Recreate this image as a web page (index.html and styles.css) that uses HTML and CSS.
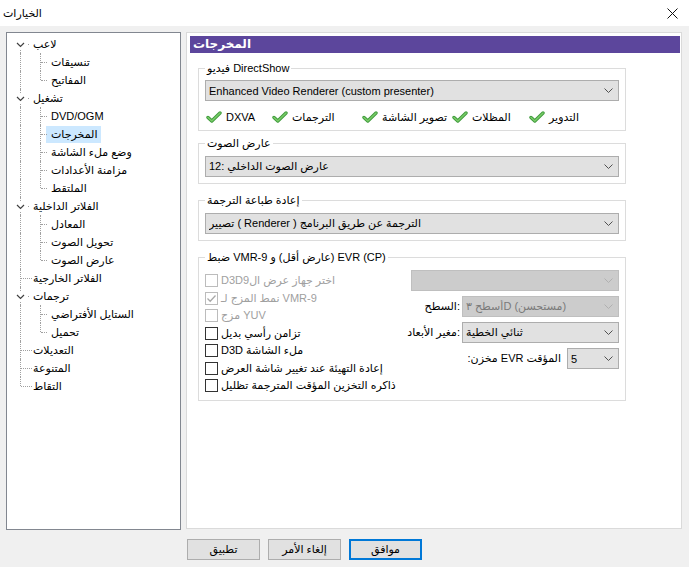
FILE: index.html
```html
<!DOCTYPE html>
<html lang="ar">
<head>
<meta charset="utf-8">
<title>الخيارات</title>
<link rel="stylesheet" href="styles.css">
</head>
<body>
<div class="titlebar">
  <span class="title">الخيارات</span>
  <svg class="close" width="11" height="11" viewBox="0 0 11 11"><path d="M0.5 0.5 L10.5 10.5 M10.5 0.5 L0.5 10.5" stroke="#111" stroke-width="1" fill="none"/></svg>
</div>
<div class="content">
  <div class="tree">
    <div class="row"><span class="cell c0 vb"><svg class="exp" width="9" height="9" viewBox="0 0 9 9"><rect width="9" height="9" fill="#fff"/><path d="M1 3 L4.5 6.5 L8 3" stroke="#404040" stroke-width="1.2" fill="none"/></svg><i class="dot"></i></span><span class="t">لاعب</span></div>
    <div class="row"><span class="cell c0 v"></span><span class="cell c1 v h"></span><span class="t">تنسيقات</span></div>
    <div class="row"><span class="cell c0 v"></span><span class="cell c1 vt h"></span><span class="t">المفاتيح</span></div>
    <div class="row"><span class="cell c0 v"><svg class="exp" width="9" height="9" viewBox="0 0 9 9"><rect width="9" height="9" fill="#fff"/><path d="M1 3 L4.5 6.5 L8 3" stroke="#404040" stroke-width="1.2" fill="none"/></svg><i class="dot"></i></span><span class="t">تشغيل</span></div>
    <div class="row"><span class="cell c0 v"></span><span class="cell c1 v h"></span><span class="t">DVD/OGM</span></div>
    <div class="row"><span class="cell c0 v"></span><span class="cell c1 v h"></span><span class="t sel">المخرجات</span></div>
    <div class="row"><span class="cell c0 v"></span><span class="cell c1 v h"></span><span class="t">وضع ملء الشاشة</span></div>
    <div class="row"><span class="cell c0 v"></span><span class="cell c1 v h"></span><span class="t">مزامنة الأعدادات</span></div>
    <div class="row"><span class="cell c0 v"></span><span class="cell c1 vt h"></span><span class="t">الملتقط</span></div>
    <div class="row"><span class="cell c0 v"><svg class="exp" width="9" height="9" viewBox="0 0 9 9"><rect width="9" height="9" fill="#fff"/><path d="M1 3 L4.5 6.5 L8 3" stroke="#404040" stroke-width="1.2" fill="none"/></svg><i class="dot"></i></span><span class="t">الفلاتر الداخلية</span></div>
    <div class="row"><span class="cell c0 v"></span><span class="cell c1 v h"></span><span class="t">المعادل</span></div>
    <div class="row"><span class="cell c0 v"></span><span class="cell c1 v h"></span><span class="t">تحويل الصوت</span></div>
    <div class="row"><span class="cell c0 v"></span><span class="cell c1 vt h"></span><span class="t">عارض الصوت</span></div>
    <div class="row"><span class="cell c0 v h"></span><span class="t">الفلاتر الخارجية</span></div>
    <div class="row"><span class="cell c0 v"><svg class="exp" width="9" height="9" viewBox="0 0 9 9"><rect width="9" height="9" fill="#fff"/><path d="M1 3 L4.5 6.5 L8 3" stroke="#404040" stroke-width="1.2" fill="none"/></svg><i class="dot"></i></span><span class="t">ترجمات</span></div>
    <div class="row"><span class="cell c0 v"></span><span class="cell c1 v h"></span><span class="t">الستايل الأفتراضي</span></div>
    <div class="row"><span class="cell c0 v"></span><span class="cell c1 vt h"></span><span class="t">تحميل</span></div>
    <div class="row"><span class="cell c0 v h"></span><span class="t">التعديلات</span></div>
    <div class="row"><span class="cell c0 v h"></span><span class="t">المتنوعة</span></div>
    <div class="row"><span class="cell c0 vt h"></span><span class="t">التقاط</span></div>
  </div>

  <div class="panel">
    <div class="header">المخرجات</div>

    <div class="group g1">
      <div class="legend"><span class="i">فيديو</span> <span class="i">DirectShow</span></div>
      <div class="combo"><span class="val">Enhanced Video Renderer (custom presenter)</span><svg class="chev" width="9" height="5" viewBox="0 0 9 5"><path d="M0.5 0.5 L4.5 4.5 L8.5 0.5" stroke="#505050" fill="none"/></svg></div>
      <div class="caps">
        <span class="cap"><svg class="ok" width="16" height="12" viewBox="0 0 16 12"><path d="M2 6.5 L5.8 10 L14 2" stroke="#3f9a3c" stroke-width="3.4" stroke-linecap="round" stroke-linejoin="round" fill="none"/><path d="M2 6.5 L5.8 10 L14 2" stroke="#79cc68" stroke-width="1.6" stroke-linecap="round" stroke-linejoin="round" fill="none"/></svg>DXVA</span>
        <span class="cap"><svg class="ok" width="16" height="12" viewBox="0 0 16 12"><path d="M2 6.5 L5.8 10 L14 2" stroke="#3f9a3c" stroke-width="3.4" stroke-linecap="round" stroke-linejoin="round" fill="none"/><path d="M2 6.5 L5.8 10 L14 2" stroke="#79cc68" stroke-width="1.6" stroke-linecap="round" stroke-linejoin="round" fill="none"/></svg>الترجمات</span>
        <span class="cap"><svg class="ok" width="16" height="12" viewBox="0 0 16 12"><path d="M2 6.5 L5.8 10 L14 2" stroke="#3f9a3c" stroke-width="3.4" stroke-linecap="round" stroke-linejoin="round" fill="none"/><path d="M2 6.5 L5.8 10 L14 2" stroke="#79cc68" stroke-width="1.6" stroke-linecap="round" stroke-linejoin="round" fill="none"/></svg>تصوير الشاشة</span>
        <span class="cap"><svg class="ok" width="16" height="12" viewBox="0 0 16 12"><path d="M2 6.5 L5.8 10 L14 2" stroke="#3f9a3c" stroke-width="3.4" stroke-linecap="round" stroke-linejoin="round" fill="none"/><path d="M2 6.5 L5.8 10 L14 2" stroke="#79cc68" stroke-width="1.6" stroke-linecap="round" stroke-linejoin="round" fill="none"/></svg>المظلات</span>
        <span class="cap"><svg class="ok" width="16" height="12" viewBox="0 0 16 12"><path d="M2 6.5 L5.8 10 L14 2" stroke="#3f9a3c" stroke-width="3.4" stroke-linecap="round" stroke-linejoin="round" fill="none"/><path d="M2 6.5 L5.8 10 L14 2" stroke="#79cc68" stroke-width="1.6" stroke-linecap="round" stroke-linejoin="round" fill="none"/></svg>التدوير</span>
      </div>
    </div>

    <div class="group g2">
      <div class="legend">عارض الصوت</div>
      <div class="combo"><span class="val"><span class="i">12:</span> <span class="i">عارض الصوت الداخلي</span></span><svg class="chev" width="9" height="5" viewBox="0 0 9 5"><path d="M0.5 0.5 L4.5 4.5 L8.5 0.5" stroke="#505050" fill="none"/></svg></div>
    </div>

    <div class="group g3">
      <div class="legend">إعادة طباعة الترجمة</div>
      <div class="combo"><span class="val"><span class="i">تصيير</span> <span class="i">( Renderer )</span> <span class="i">الترجمة عن طريق البرنامج</span></span><svg class="chev" width="9" height="5" viewBox="0 0 9 5"><path d="M0.5 0.5 L4.5 4.5 L8.5 0.5" stroke="#505050" fill="none"/></svg></div>
    </div>

    <div class="group g4">
      <div class="legend"><span class="i">ضبط</span> <span class="i">VMR-9</span> <span class="i">و</span> <span class="i">(عارض أقل)</span> <span class="i">EVR (CP)</span></div>
      <div class="checks">
        <div class="cb dis"><span class="box"></span><span class="lbl"><span class="i">D3D9</span><span class="i">اختر جهاز عرض ال</span></span></div>
        <div class="cb dis"><span class="box"><svg width="11" height="11" viewBox="0 0 11 11"><path d="M1.5 5.5 L4.2 8.2 L9.5 2.5" stroke="#a8a8a8" stroke-width="1.3" fill="none"/></svg></span><span class="lbl"><span class="i">نمط المزج لـ</span> <span class="i">VMR-9</span></span></div>
        <div class="cb dis"><span class="box"></span><span class="lbl"><span class="i">مزج</span> <span class="i">YUV</span></span></div>
        <div class="cb"><span class="box"></span><span class="lbl">تزامن رأسي بديل</span></div>
        <div class="cb"><span class="box"></span><span class="lbl"><span class="i">D3D</span> <span class="i">ملء الشاشة</span></span></div>
        <div class="cb"><span class="box"></span><span class="lbl">إعادة التهيئة عند تغيير شاشة العرض</span></div>
        <div class="cb"><span class="box"></span><span class="lbl">ذاكره التخزين المؤقت المترجمة تظليل</span></div>
      </div>
      <div class="opts">
        <div class="combo dcombo wide"><span class="val"></span><svg class="chev" width="9" height="5" viewBox="0 0 9 5"><path d="M0.5 0.5 L4.5 4.5 L8.5 0.5" stroke="#b0b0b0" fill="none"/></svg></div>
        <div class="orow"><span class="lab">السطح:</span><div class="combo dcombo mid"><span class="val"><span class="i">أسطح ٣</span><span class="i">D</span> <span class="i">(مستحسن)</span></span><svg class="chev" width="9" height="5" viewBox="0 0 9 5"><path d="M0.5 0.5 L4.5 4.5 L8.5 0.5" stroke="#b0b0b0" fill="none"/></svg></div></div>
        <div class="orow"><span class="lab">مغير الأبعاد:</span><div class="combo mid"><span class="val">ثنائي الخطية</span><svg class="chev" width="9" height="5" viewBox="0 0 9 5"><path d="M0.5 0.5 L4.5 4.5 L8.5 0.5" stroke="#505050" fill="none"/></svg></div></div>
        <div class="orow"><span class="lab" dir="rtl">المؤقت EVR مخزن:</span><div class="combo small"><span class="val">5</span><svg class="chev" width="9" height="5" viewBox="0 0 9 5"><path d="M0.5 0.5 L4.5 4.5 L8.5 0.5" stroke="#505050" fill="none"/></svg></div></div>
      </div>
    </div>
  </div>
</div>
<div class="footer">
  <button class="btn">تطبيق</button>
  <button class="btn">إلغاء الأمر</button>
  <button class="btn def">موافق</button>
</div>
</body>
</html>
```

FILE: styles.css
```css
* { box-sizing: border-box; }
html, body { margin: 0; padding: 0; }
body {
  width: 689px;
  height: 567px;
  overflow: hidden;
  background: #f0f0f0;
  font-family: "Liberation Sans", "DejaVu Sans", sans-serif;
  font-size: 11px;
  color: #000;
}
.i { unicode-bidi: isolate; }

.titlebar {
  height: 26px;
  background: #fff;
  display: flex;
  align-items: center;
  justify-content: space-between;
  padding: 0 11px 0 3px;
}
.title { font-size: 11px; }

.content {
  display: flex;
  gap: 5px;
  padding: 6px 6px 0 6px;
}

/* tree */
.tree {
  width: 175px;
  height: 498px;
  border: 1px solid #828790;
  background: #fff;
  padding-top: 2px;
  flex: none;
}
.row { display: flex; height: 18px; align-items: center; }
.cell { position: relative; height: 18px; flex: none; }
.c0 { width: 21px; }
.c1 { width: 18px; }
.v::before, .vt::before, .vb::before {
  content: "";
  position: absolute;
  top: 0; bottom: 0;
  border-left: 1px dotted #a0a0a0;
}
.c0::before { left: 13px; }
.c1::before { left: 12px; }
.vt::before { bottom: 9px; }
.vb::before { top: 9px; }
.h::after {
  content: "";
  position: absolute;
  top: 9px;
  height: 0;
  border-top: 1px dotted #a0a0a0;
}
.c0.h::after { left: 14px; width: 11px; }
.c1.h::after { left: 13px; width: 6px; }
.exp { position: absolute; left: 9px; top: 5px; }
.dot { position: absolute; left: 21px; top: 9px; width: 1px; height: 1px; background: #a0a0a0; }
.t {
  white-space: nowrap;
  padding: 0 4px 0 5px;
  height: 17px;
  line-height: 17px;
}
.t.sel { background: #cce8ff; }

/* panel */
.panel {
  width: 496px;
  height: 497px;
  border: 1px solid #dadada;
  background: #fff;
  padding: 3px 1px 0 3px;
  flex: none;
}
.header {
  height: 17px;
  line-height: 17px;
  background: #5c469c;
  color: #fff;
  font-weight: bold;
  font-size: 12px;
  padding-left: 3px;
}
.group {
  position: relative;
  width: 428px;
  margin-left: 8px;
  border: 1px solid #dcdcdc;
  padding: 0 6px;
}
.legend {
  position: absolute;
  top: -8px;
  left: 6px;
  padding: 0 2px;
  background: #fff;
  line-height: 15px;
  white-space: nowrap;
}
.g1 { margin-top: 15px; height: 63px; padding-top: 11px; }
.g2 { margin-top: 12px; height: 41px; padding-top: 12px; }
.g3 { margin-top: 16px; height: 41px; padding-top: 12px; }
.g4 {
  margin-top: 16px;
  height: 144px;
  padding-top: 12px;
  display: flex;
  align-items: flex-start;
}

.combo {
  height: 21px;
  background: #e1e1e1;
  border: 1px solid #adadad;
  display: flex;
  align-items: center;
  padding-left: 3px;
  white-space: nowrap;
}
.combo .val { flex: 1; overflow: hidden; }
.chev { flex: none; margin-right: 5px; }
.dcombo { background: #cccccc; border-color: #bfbfbf; color: #7a7a7a; }

.caps {
  display: grid;
  grid-template-columns: 66px 90px 90px 77px 1fr;
  margin-top: 8px;
  padding-left: 1px;
  height: 16px;
}
.cap { display: flex; align-items: center; gap: 4px; white-space: nowrap; }
.ok { flex: none; }

.checks { display: flex; flex-direction: column; padding-top: 2px; }
.cb { display: flex; align-items: center; height: 17.5px; gap: 3px; white-space: nowrap; }
.box {
  width: 13px; height: 13px;
  border: 1px solid #333;
  background: #fff;
  flex: none;
  display: flex; align-items: center; justify-content: center;
}
.cb.dis { color: #a0a0a0; }
.cb.dis .box { border-color: #bcbcbc; }

.opts {
  margin-left: auto;
  display: flex;
  flex-direction: column;
  align-items: flex-end;
  gap: 5px;
}
.orow { display: flex; align-items: center; gap: 2px; white-space: nowrap; }
.wide { width: 208px; }
.mid { width: 157px; }
.small { width: 52px; }
.orow .lab + .small { margin-left: 4px; }

/* footer */
.footer {
  display: flex;
  gap: 8px;
  padding: 9px 0 0 187px;
}
.btn {
  width: 73px;
  height: 21px;
  background: #e1e1e1;
  border: 1px solid #adadad;
  font-family: inherit;
  font-size: 11px;
  padding: 0;
  color: #000;
}
.btn.def { border: 2px solid #0078d7; }
```
